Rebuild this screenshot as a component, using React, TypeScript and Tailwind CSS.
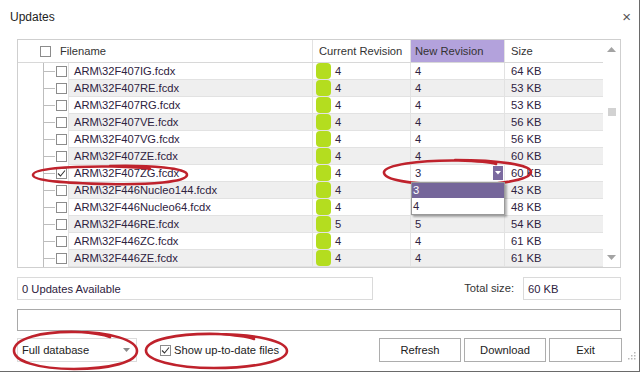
import React from "react";

type Row = { name: string; cur: string; next: string; size: string; checked?: boolean; editing?: boolean; hidden?: boolean };

const rows: Row[] = [
  { name: "ARM\\32F407IG.fcdx", cur: "4", next: "4", size: "64 KB" },
  { name: "ARM\\32F407RE.fcdx", cur: "4", next: "4", size: "53 KB" },
  { name: "ARM\\32F407RG.fcdx", cur: "4", next: "4", size: "53 KB" },
  { name: "ARM\\32F407VE.fcdx", cur: "4", next: "4", size: "56 KB" },
  { name: "ARM\\32F407VG.fcdx", cur: "4", next: "4", size: "56 KB" },
  { name: "ARM\\32F407ZE.fcdx", cur: "4", next: "4", size: "60 KB" },
  { name: "ARM\\32F407ZG.fcdx", cur: "4", next: "3", size: "60 KB", checked: true, editing: true },
  // new revision of these two sits under the open list
  { name: "ARM\\32F446Nucleo144.fcdx", cur: "4", next: "4", size: "43 KB", hidden: true },
  { name: "ARM\\32F446Nucleo64.fcdx", cur: "4", next: "4", size: "48 KB", hidden: true },
  { name: "ARM\\32F446RE.fcdx", cur: "5", next: "5", size: "54 KB" },
  { name: "ARM\\32F446ZC.fcdx", cur: "4", next: "4", size: "61 KB" },
  { name: "ARM\\32F446ZE.fcdx", cur: "4", next: "4", size: "61 KB" },
];

const Check = ({ checked }: { checked?: boolean }) => (
  <div className="w-[11px] h-[11px] border border-[#8c8c8c] bg-white flex items-center justify-center shrink-0">
    {checked && (
      <svg width="9" height="9" viewBox="0 0 9 9">
        <path d="M1 4.5 L3.5 7 L8 1.5" fill="none" stroke="#333" strokeWidth="1.1" />
      </svg>
    )}
  </div>
);

// hand drawn red marks
const Marks = () => (
  <svg className="absolute inset-0 pointer-events-none" width="643" height="373">
    <g fill="none" stroke="#bf222c" strokeWidth="2.6" strokeLinecap="round">
      <path d="M110 166 C150 165 188 168 187 175 C186 182 150 185 108 184 C66 183 33 181 33 175 C33 169 66 166 112 166.5 C130 167 145 168 150 169" />
      <path d="M455 160 C500 160 531 165 531 172 C531 180 495 186 452 185 C410 184 383 180 384 172 C385 165 418 160 458 160.5 C475 161 490 162 496 164" />
      <path d="M75 332 C110 332 137 340 137 351 C137 362 110 369 74 369 C38 369 13 361 14 350 C15 339 40 331 78 332 C95 333 105 335 110 337" />
      <path d="M215 334 C255 334 287 341 287 351 C287 361 255 368 214 368 C175 368 145 360 146 350 C147 340 176 333 218 334 C235 335 248 337 254 339" />
    </g>
  </svg>
);

export default function App() {
  return (
    <div className="relative w-[643px] h-[373px] bg-white overflow-hidden text-[11.2px] text-[#2e2240]" style={{ fontFamily: '"Liberation Sans", Arial, sans-serif' }}>
      <div className="w-[640px] h-[372px] border-r border-b border-[#6a6a6a] flex flex-col">
        {/* title */}
        <div className="h-[34px] flex items-center justify-between pl-[10px] pr-[8px] text-[#1e1e1e] text-[12px]">
          <span>Updates</span>
          <span className="text-[15px] text-[#555] font-light">×</span>
        </div>

        {/* grid */}
        <div className="ml-[17px] mt-[5px] w-[604px] h-[229px] border border-[#cfcfcf] flex">
          <div className="w-[585px] flex flex-col">
            <div className="h-[23px] flex border-b border-[#d8d8d8] text-[#333]">
              <div className="w-[295px] flex items-center pl-[22px] gap-[9px] border-r border-[#e2e2e2]">
                <Check />
                <span>Filename</span>
              </div>
              <div className="w-[98px] flex items-center pl-[6px] border-r border-[#e2e2e2]">Current Revision</div>
              <div className="w-[94px] flex items-center pl-[4px] bg-[#b3a2dc] border-r border-[#e2e2e2]">New Revision</div>
              <div className="w-[98px] flex items-center pl-[6px]">Size</div>
            </div>
            {rows.map((r, i) => {
              const bg = i % 2 === 1 ? "bg-[#efefef]" : "bg-white";
              return (
                <div key={r.name} className="h-[17px] flex">
                  <div className="w-[50px] flex items-center">
                    <div className="w-[25px]" />
                    <div className="w-[13px] self-stretch border-l border-[#bdbdbd] flex items-center">
                      <div className="w-[11px] h-px bg-[#bdbdbd]" />
                    </div>
                    <Check checked={r.checked} />
                  </div>
                  <div className={`w-[245px] flex items-center pl-[5px] border-l border-r border-b border-[#e2e2e2] ${bg}`}>{r.name}</div>
                  <div className={`w-[98px] flex items-center pl-[3px] gap-[4px] border-r border-b border-[#e2e2e2] ${bg}`}>
                    <div className="w-[15px] h-[16px] rounded-[4px] bg-[#b4dd1f]" />
                    <span>{r.cur}</span>
                  </div>
                  {r.editing ? (
                    <div className="relative w-[94px] flex items-center pl-[4px] pr-[1px] border-r border-b border-[#e2e2e2] bg-white">
                      <span className="flex-1">{r.next}</span>
                      <div className="w-[10px] h-[14px] bg-[#7b6a9f] flex items-center justify-center">
                        <svg width="6" height="4" viewBox="0 0 6 4">
                          <path d="M0 0 H6 L3 3.5 Z" fill="#fff" />
                        </svg>
                      </div>
                      <div className="absolute left-0 top-[17px] w-[94px] bg-white border border-[#9a9a9a] shadow-[2px_2px_2px_rgba(0,0,0,0.3)] z-10">
                        <div className="h-[15px] bg-[#75669a] text-white flex items-center pl-[1px]">3</div>
                        <div className="h-[16px] flex items-center pl-[1px]">4</div>
                      </div>
                    </div>
                  ) : (
                    <div className={`w-[94px] flex items-center pl-[4px] border-r border-b border-[#e2e2e2] ${bg}`}>{r.hidden ? "" : r.next}</div>
                  )}
                  <div className={`w-[98px] flex items-center pl-[6px] border-b border-[#e2e2e2] ${bg}`}>{r.size}</div>
                </div>
              );
            })}
          </div>
          {/* scrollbar */}
          <div className="w-[17px] flex flex-col items-center justify-between py-[7px] bg-white">
            <svg width="9" height="5" viewBox="0 0 9 5"><path d="M0 5 L4.5 0 L9 5 Z" fill="#a3a3a3" /></svg>
            <div className="flex-1 w-full flex flex-col items-center pt-[56px]">
              <div className="w-[8px] h-[8px] bg-[#d2d2d2]" />
            </div>
            <svg width="9" height="5" viewBox="0 0 9 5"><path d="M0 0 L9 0 L4.5 5 Z" fill="#a3a3a3" /></svg>
          </div>
        </div>

        {/* status row */}
        <div className="ml-[17px] mt-[9px] w-[604px] h-[23px] flex items-stretch">
          <div className="w-[356px] border border-[#dadada] pl-[4px] pt-[3px]">0 Updates Available</div>
          <div className="flex-1 flex items-center justify-end pr-[9px] text-[#333]">Total size:</div>
          <div className="w-[98px] border border-[#dadada] pl-[4px] pt-[3px]">60 KB</div>
        </div>

        <div className="ml-[17px] mt-[9px] w-[604px] h-[22px] border border-[#a9a9a9]" />

        {/* bottom row */}
        <div className="ml-[17px] mt-[7px] w-[605px] h-[24px] flex items-stretch text-[#222]">
          <div className="w-[120px] border border-[#dcdcdc] flex items-center pl-[4px] pr-[6px]">
            <span className="flex-1">Full database</span>
            <svg width="7" height="4" viewBox="0 0 7 4"><path d="M0 0 H7 L3.5 4 Z" fill="#8a8a8a" /></svg>
          </div>
          <div className="ml-[23px] flex items-center gap-[3px]">
            <Check checked />
            <span>Show up-to-date files</span>
          </div>
          <div className="flex-1" />
          <button className="w-[82px] border border-[#adadad] bg-white flex items-center justify-center">Refresh</button>
          <button className="ml-[3px] w-[82px] border border-[#adadad] bg-white flex items-center justify-center">Download</button>
          <button className="ml-[3px] w-[73px] border border-[#adadad] bg-white flex items-center justify-center">Exit</button>
        </div>

        {/* size grip */}
        <div className="flex justify-end pr-[3px] mt-[-10px]">
          <svg width="8" height="8" viewBox="0 0 8 8">
            <g fill="#b8b8b8">
              <rect x="6" y="0" width="1.5" height="1.5" />
              <rect x="3" y="3" width="1.5" height="1.5" />
              <rect x="6" y="3" width="1.5" height="1.5" />
              <rect x="0" y="6" width="1.5" height="1.5" />
              <rect x="3" y="6" width="1.5" height="1.5" />
              <rect x="6" y="6" width="1.5" height="1.5" />
            </g>
          </svg>
        </div>
      </div>
      <Marks />
    </div>
  );
}
